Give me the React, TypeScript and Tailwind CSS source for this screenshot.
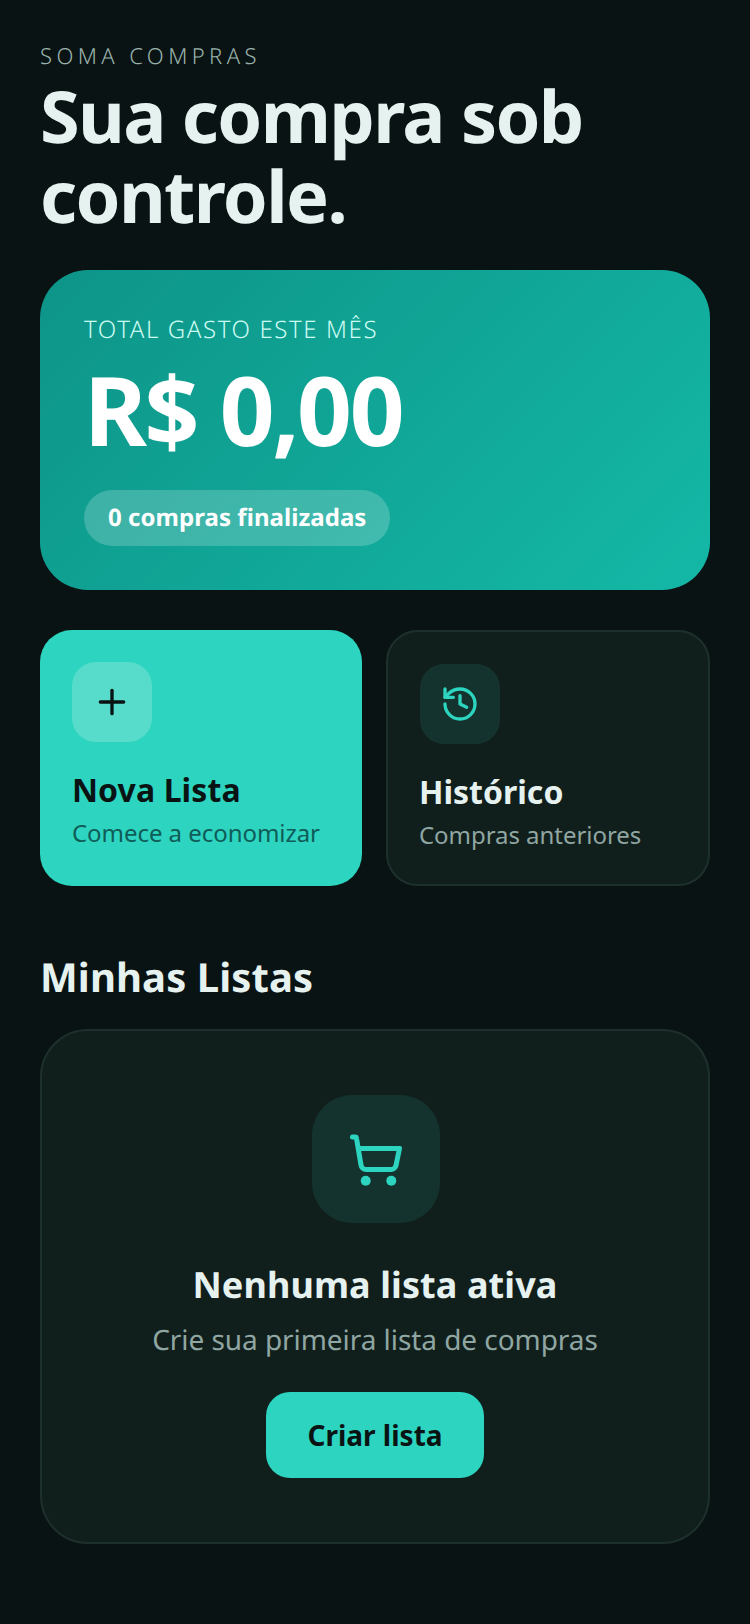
import { History, Plus } from 'lucide-react';

// carrinho desenhado à mão, o do lucide tem a alça comprida demais
function CartIcon() {
  return (
    <svg width="56" height="56" viewBox="1 -1 56 56" fill="none" stroke="currentColor" strokeWidth="5" strokeLinecap="round" strokeLinejoin="round">
      <path d="M5.5 5H8a1.5 1.5 0 0 1 1.5 1.3L14 33a5 5 0 0 0 5 4.5h25a5 5 0 0 0 5-4l3.5-17H11.5" />
      <circle cx="18.7" cy="48.7" r="5" fill="currentColor" stroke="none" />
      <circle cx="44.3" cy="48.7" r="5" fill="currentColor" stroke="none" />
    </svg>
  );
}

export default function App() {
  return (
    <div className="min-h-[1624px] bg-[#0a1313] px-10 pt-10 font-['Noto_Sans',sans-serif] text-[#e6f2f0] [text-rendering:geometricPrecision]">
      <p className="text-[22px] font-light leading-[32px] tracking-[0.2em] text-[#9ab3ae]">SOMA COMPRAS</p>
      <h1 className="mt-1 text-[72px] font-bold leading-[80px] tracking-[-0.0225em]">
        Sua compra sob
        <br />
        controle.
      </h1>

      {/* resumo do mês */}
      <section className="mt-[34px] h-[320px] rounded-[48px] bg-[linear-gradient(135deg,#0d9488,#14b8a6)] px-11 pt-11 text-white">
        <p className="text-2xl font-light leading-8 tracking-[0.0665em] text-[#ccfbf1]">TOTAL GASTO ESTE MÊS</p>
        <p className="mt-4 text-[96px] font-bold leading-[96px] tracking-[-0.025em]">R$ 0,00</p>
        <span className="mt-8 inline-block rounded-full bg-white/20 px-6 py-3 text-2xl font-bold leading-8 tracking-[0.05px]">
          0 compras finalizadas
        </span>
      </section>

      <div className="mt-10 grid grid-cols-[322px_324px] gap-6">
        <button className="flex h-64 flex-col items-start justify-start rounded-[32px] bg-[#2dd4bf] p-8 text-left">
          <div className="flex h-20 w-20 items-center justify-center rounded-3xl bg-white/20 text-[#0a1313]">
            <Plus size={40} />
          </div>
          <h2 className="mt-6 text-[32px] font-bold leading-[48px] tracking-[0.1px] text-[#0a1313]">Nova Lista</h2>
          <p className="mt-[3px] text-2xl leading-8 tracking-[-0.05px] text-[#0f5c58]">Comece a economizar</p>
        </button>
        <button className="flex h-64 flex-col items-start justify-start rounded-[32px] border-2 border-[#1e302c] bg-[#111f1c] p-8 text-left">
          <div className="flex h-20 w-20 items-center justify-center rounded-3xl bg-[#15332e] text-[#2dd4bf]">
            <History size={40} />
          </div>
          <h2 className="-ml-px mt-6 text-[32px] font-bold leading-[48px]">Histórico</h2>
          <p className="-ml-px mt-[3px] text-2xl leading-8 tracking-[-0.05px] text-[#8fa6a2]">Compras anteriores</p>
        </button>
      </div>

      <h2 className="mt-[63px] text-[40px] font-bold leading-[56px] tracking-[0.1px]">Minhas Listas</h2>
      <section className="mt-6 flex h-[515px] flex-col items-center rounded-[48px] border-2 border-[#1e302c] bg-[#111f1c] pt-16">
        <div className="ml-[2px] flex h-32 w-32 items-center justify-center rounded-[40px] bg-[#15332e] text-[#2dd4bf]">
          <CartIcon />
        </div>
        <h3 className="mt-[34px] text-4xl font-bold leading-[56px] tracking-[0.1px]">Nenhuma lista ativa</h3>
        <p className="mt-[7px] text-[28px] leading-10 tracking-[-0.06px] text-[#8fa6a2]">Crie sua primeira lista de compras</p>
        <button className="mt-8 h-[86px] w-[218px] rounded-3xl bg-[#2dd4bf] text-[28px] font-bold text-[#0a1313]">
          Criar lista
        </button>
      </section>
    </div>
  );
}
